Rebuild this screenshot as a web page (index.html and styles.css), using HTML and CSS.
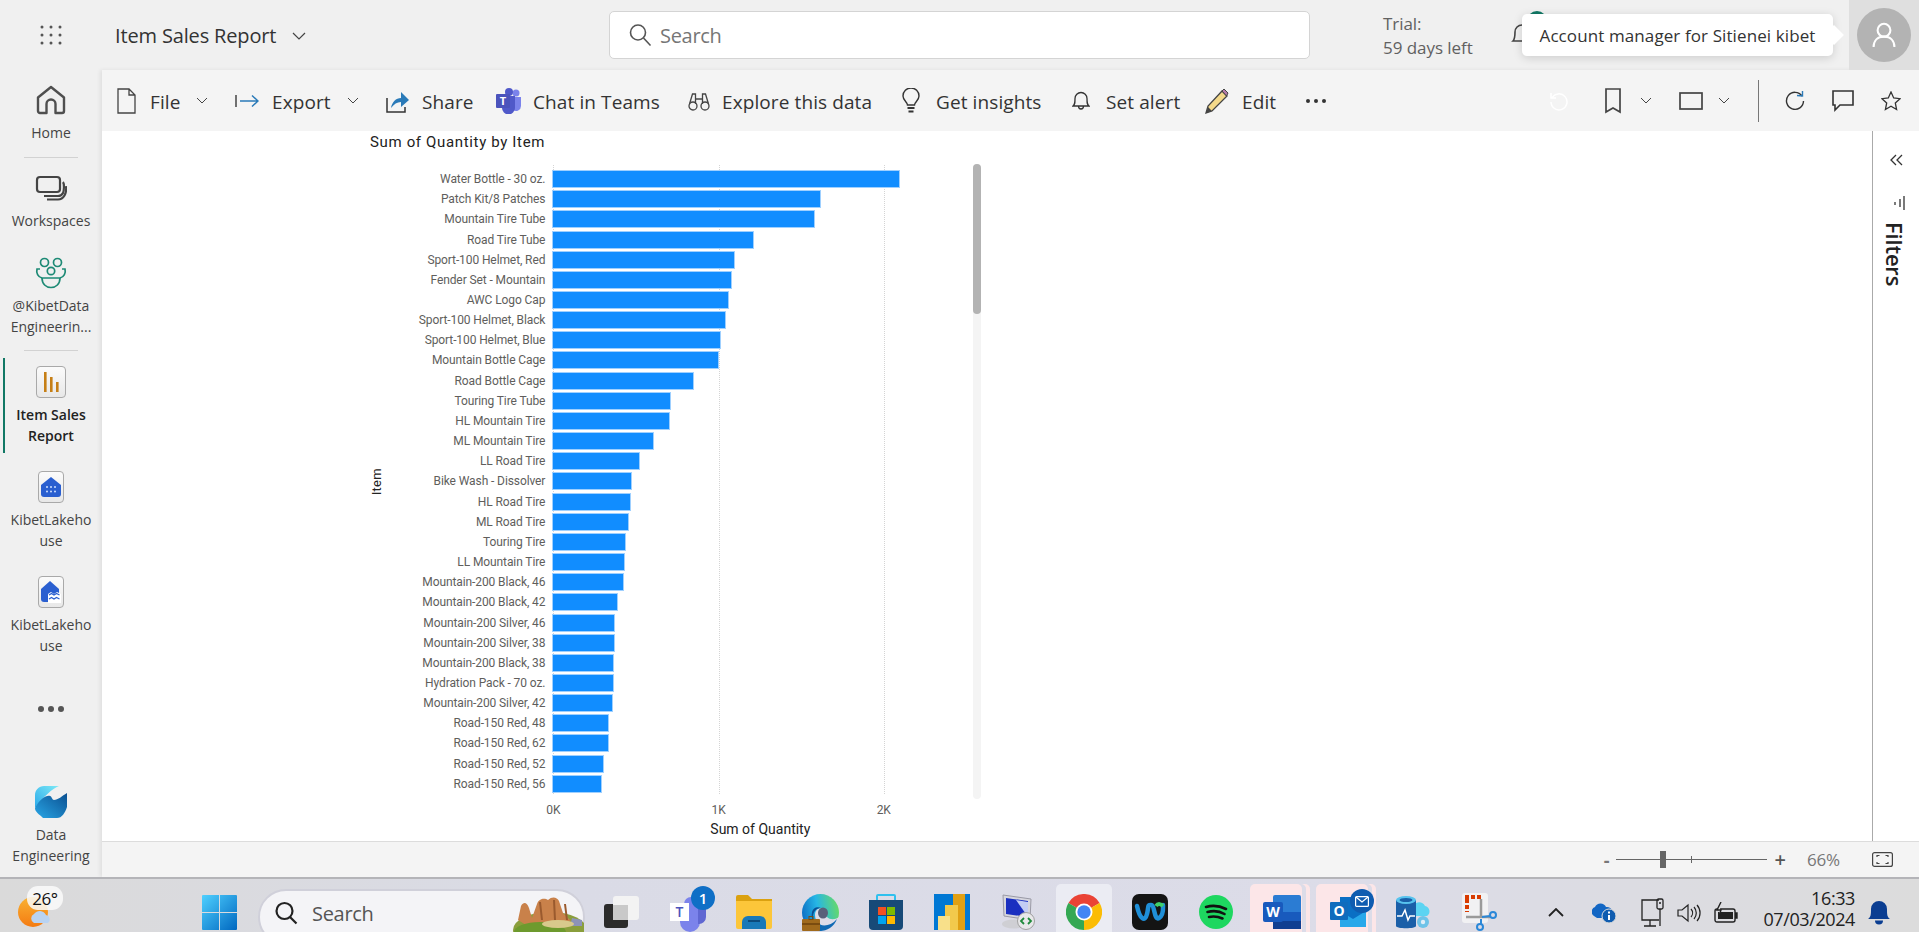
FILE: index.html
```html
<!DOCTYPE html>
<html>
<head>
    <meta charset="UTF-8">
    <title>Item Sales Report</title>
    <link rel="stylesheet" href="styles.css">
</head>
<body>
    <!-- top bar -->
    <header class="topbar">
        <div class="waffle">
            <svg width="24" height="22" viewBox="0 0 24 22" fill="#555"><circle cx="3" cy="3" r="1.5"/><circle cx="12" cy="3" r="1.5"/><circle cx="21" cy="3" r="1.5"/><circle cx="3" cy="11" r="1.5"/><circle cx="12" cy="11" r="1.5"/><circle cx="21" cy="11" r="1.5"/><circle cx="3" cy="19" r="1.5"/><circle cx="12" cy="19" r="1.5"/><circle cx="21" cy="19" r="1.5"/></svg>
        </div>
        <div class="report-title">
            <span>Item Sales Report</span>
            <svg width="14" height="8" viewBox="0 0 14 8" fill="none" stroke="#444" stroke-width="1.2"><path d="M1 1l6 6 6-6"/></svg>
        </div>
        <div class="searchbox">
            <svg width="24" height="24" viewBox="0 0 24 24" fill="none" stroke="#555" stroke-width="1.6"><circle cx="10" cy="9.5" r="7.5"/><path d="M15.5 15l7 7.5"/></svg>
            <span>Search</span>
        </div>
        <div class="trial">
            <div class="trial-text">Trial:<br>59 days left</div>
            <svg class="trial-bell" width="24" height="28" viewBox="0 0 24 28" fill="none" stroke="#444" stroke-width="1.6"><path d="M3 21c2-2 2-4 2-9a7 7 0 0 1 14 0c0 5 0 7 2 9z"/></svg>
            <span class="trial-dot"></span>
        </div>
        <div class="avatar-cell">
            <div class="avatar">
                <svg width="24" height="26" viewBox="0 0 30 32" fill="none" stroke="#fff" stroke-width="2.6"><circle cx="15" cy="10" r="8"/><path d="M2 31c0-8 5-13 13-13s13 5 13 13"/></svg>
            </div>
        </div>
        <div class="tooltip">Account manager for Sitienei kibet</div>
    </header>

    <div class="main">
        <!-- left nav -->
        <nav class="rail">
            <a class="nav-item nav-home">
                <span class="nav-icon"><svg width="30" height="30" viewBox="0 0 30 30" fill="none" stroke="#4f4f4f" stroke-width="2.4" stroke-linejoin="round"><path d="M2 12.5L15 2l13 10.5V26a2 2 0 0 1-2 2h-6.500V19a4.500 4.500 0 0 0-9 0v9H4a2 2 0 0 1-2-2z"/></svg></span>
                <span class="nav-label">Home</span>
            </a>
            <div class="nav-divider"></div>
            <a class="nav-item nav-space">
                <span class="nav-icon"><svg width="32" height="26" viewBox="0 0 32 26" fill="none" stroke="#444" stroke-width="2.200"><rect x="2" y="2" width="23" height="15" rx="3"/><path d="M28 7c1.500 2 1 9 0 11s-3 3-5 3H9"/><path d="M31 11c.5 4 0 7-1.500 9.500S26 24.500 23 24.500H12"/></svg></span>
                <span class="nav-label">Workspaces</span>
            </a>
            <a class="nav-item nav-group">
                <span class="nav-icon"><svg width="32" height="32" viewBox="0 0 32 32" fill="none" stroke="#1d8a75" stroke-width="1.700"><circle cx="9.500" cy="5.500" r="4"/><circle cx="22.500" cy="5.500" r="4"/><circle cx="16" cy="14" r="3.700"/><path d="M5 12H2c-1 4 1 8 5 9"/><path d="M27 12h3c1 4-1 8-5 9"/><path d="M7 21h18c0 6-4 9.500-9 9.500S7 27 7 21z"/></svg></span>
                <span class="nav-label">@KibetData<br>Engineerin...</span>
            </a>
            <div class="nav-divider nav-divider-low"></div>
            <a class="nav-item nav-active">
                <span class="tile"><svg width="16" height="20" viewBox="0 0 16 20" fill="#c67f16"><rect x="1" y="0" width="2.600" height="20"/><rect x="7" y="5" width="2.600" height="15"/><rect x="13" y="10" width="2.600" height="10"/></svg></span>
                <span class="nav-label">Item Sales<br>Report</span>
            </a>
            <a class="nav-item nav-lake">
                <span class="tile"><svg width="20" height="20" viewBox="0 0 20 20"><path d="M0 8L10 0l10 8v9a3 3 0 0 1-3 3H3a3 3 0 0 1-3-3z" fill="#2a5fd0"/><g fill="#cfe0ff"><circle cx="6" cy="10" r="1"/><circle cx="10" cy="10" r="1"/><circle cx="14" cy="10" r="1"/><circle cx="6" cy="14.500" r="1"/><circle cx="10" cy="14.500" r="1"/><circle cx="14" cy="14.500" r="1"/></g></svg></span>
                <span class="nav-label">KibetLakeho<br>use</span>
            </a>
            <a class="nav-item nav-ware">
                <span class="tile"><svg width="20" height="22" viewBox="0 0 20 22"><path d="M0 8L9 0l9 8v10a3 3 0 0 1-3 3H3a3 3 0 0 1-3-3z" fill="#2a5fd0"/><path d="M7 13l3-2 3 2 3-2 4 2v9H7z" fill="#fff"/><path d="M8 14l2.500-1.500 2.500 1.500 2.500-1.500 3 1.500M8 18l2.500-1.500 2.500 1.500 2.500-1.500 3 1.500" fill="none" stroke="#2a5fd0" stroke-width="1.300"/></svg></span>
                <span class="nav-label">KibetLakeho<br>use</span>
            </a>
            <div class="nav-more"><i></i><i></i><i></i></div>
            <a class="nav-item nav-fabric">
                <span class="nav-icon">
                    <svg width="32" height="32" viewBox="0 0 32 32">
                        <defs>
                            <linearGradient id="fabA" x1="1" y1="0" x2="0" y2="1"><stop offset="0" stop-color="#7eeaf6"/><stop offset="1" stop-color="#2aa9ea"/></linearGradient>
                            <linearGradient id="fabB" x1="0" y1="1" x2="1" y2="0"><stop offset="0" stop-color="#29a6e6"/><stop offset="1" stop-color="#0a4f90"/></linearGradient>
                        </defs>
                        <path d="M9 0h15c-7 3-15 10-24 22V9C0 4 4 0 9 0z" fill="url(#fabA)"/>
                        <path d="M0 22c5-9 11-13 15-12 2 .5 2 4 4 4 4 0 8-4 13-7v14c-2 6-5 11-10 11H8C4 28 0 26 0 22z" fill="url(#fabB)"/>
                    </svg>
                </span>
                <span class="nav-label">Data<br>Engineering</span>
            </a>
        </nav>

        <div class="work">
            <!-- toolbar -->
            <div class="toolbar">
                <div class="tools">
                    <div class="tool">
                        <svg width="20" height="26" viewBox="0 0 20 26" fill="none" stroke="#444" stroke-width="1.300"><path d="M1 1h11l6 6v18H1zM12 1v6h6"/></svg>
                        <span>File</span>
                        <svg class="chev" width="12" height="7" viewBox="0 0 12 7" fill="none" stroke="#444"><path d="M1 1l5 5 5-5"/></svg>
                    </div>
                    <div class="tool">
                        <svg width="24" height="16" viewBox="0 0 24 16" fill="none" stroke-width="1.500"><path d="M1 2v12" stroke="#444"/><path d="M5 8h18M17 2.500L23 8l-6 5.500" stroke="#2a7ab8"/></svg>
                        <span>Export</span>
                        <svg class="chev" width="12" height="7" viewBox="0 0 12 7" fill="none" stroke="#444"><path d="M1 1l5 5 5-5"/></svg>
                    </div>
                    <div class="tool">
                        <svg width="24" height="24" viewBox="0 0 24 24"><path d="M2 9v14h18v-5" fill="none" stroke="#333" stroke-width="1.500"/><path d="M6 19c1-6 5-10 10-10V3l8 8-8 7v-5c-4 0-7 2-10 6z" fill="#2a7ab8"/></svg>
                        <span>Share</span>
                    </div>
                    <div class="tool tool-teams">
                        <svg width="26" height="26" viewBox="0 0 26 26"><circle cx="20" cy="5" r="3.500" fill="#7b83eb"/><circle cx="13" cy="4" r="4" fill="#5059c9"/><path d="M17 9h8v9a5 5 0 0 1-8 4z" fill="#7b83eb"/><path d="M6 8h13v12a6 6 0 0 1-13 0z" fill="#5059c9"/><rect x="0" y="6" width="14" height="14" rx="1" fill="#4b53bc"/><text x="7" y="17" class="tile-letter" text-anchor="middle">T</text></svg>
                        <span>Chat in Teams</span>
                    </div>
                    <div class="tool tool-bino">
                        <svg width="22" height="20" viewBox="0 0 22 20" fill="none" stroke="#444" stroke-width="1.300"><path d="M1.500 13l3-10h3v10M20.500 13l-3-10h-3v10M8 8h6"/><rect x="1" y="11" width="8" height="8" rx="4"/><rect x="13" y="11" width="8" height="8" rx="4"/></svg>
                        <span>Explore this data</span>
                    </div>
                    <div class="tool tool-wide">
                        <svg width="18" height="26" viewBox="0 0 18 26" fill="none" stroke="#333" stroke-width="1.400"><path d="M5.500 17c0-3-4.500-4.500-4.500-9a8 8 0 0 1 16 0c0 4.500-4.500 6-4.500 9z"/><path d="M5.500 20h7M6.500 23.500h5" stroke-width="1.800"/></svg>
                        <span>Get insights</span>
                    </div>
                    <div class="tool tool-wide">
                        <svg width="18" height="20" viewBox="0 0 18 20" fill="none" stroke="#333" stroke-width="1.300"><path d="M1 15c2-1.500 2-3 2-7.500a6 6 0 0 1 12 0c0 4.500 0 6 2 7.500z"/><path d="M6.500 15a2.500 3 0 0 0 5 0" /></svg>
                        <span>Set alert</span>
                    </div>
                    <div class="tool">
                        <svg width="24" height="26" viewBox="0 0 24 26"><path d="M1 25l2-7L17 3l5 5L7 23z" fill="#f4d98a" stroke="#444" stroke-width="1.300"/><path d="M17 3l2-2 4 4-1.500 3z" fill="#b57aa8" stroke="#444"/><path d="M1 25l2-6 4 4z" fill="#444"/></svg>
                        <span>Edit</span>
                    </div>
                    <div class="tool-dots"><i></i><i></i><i></i></div>
                </div>
                <div class="tools-right">
                    <span class="tr-cell"><svg width="20" height="20" viewBox="0 0 20 20" fill="none" stroke="#fff" stroke-width="1.500"><path d="M3 7a8 8 0 1 1-1 4M2 2v5h5"/></svg></span>
                    <span class="tr-cell"><svg width="16" height="26" viewBox="0 0 16 26" fill="none" stroke="#444" stroke-width="1.700"><path d="M1 1h14v23l-7-4-7 4z"/></svg></span>
                    <span class="tr-cell"><svg width="12" height="7" viewBox="0 0 12 7" fill="none" stroke="#444"><path d="M1 1l5 5 5-5"/></svg></span>
                    <span class="tr-cell"><svg width="24" height="18" viewBox="0 0 24 18" fill="none" stroke="#444" stroke-width="1.700"><rect x="1" y="1" width="22" height="16"/></svg></span>
                    <span class="tr-cell"><svg width="12" height="7" viewBox="0 0 12 7" fill="none" stroke="#444"><path d="M1 1l5 5 5-5"/></svg></span>
                    <span class="tr-cell"><i class="tr-sep"></i></span>
                    <span class="tr-cell"><svg width="20" height="20" viewBox="0 0 20 20" fill="none" stroke="#333" stroke-width="1.400"><path d="M17 5a8.500 8.500 0 1 0 1.500 5"/><path d="M12 4.500l5.500.5V0" stroke="#2a7ab8"/></svg></span>
                    <span class="tr-cell"><svg width="22" height="22" viewBox="0 0 22 22" fill="none" stroke="#333" stroke-width="1.600"><path d="M1 1h20v14H8l-5 5v-5H1z"/></svg></span>
                    <span class="tr-cell"><svg width="20" height="20" viewBox="0 0 20 20" fill="none" stroke="#333" stroke-width="1.300"><path d="M10 1l2.700 6 6.300.7-4.700 4.300 1.300 6.500L10 15.300 4.400 18.500 5.700 12 1 7.700 7.300 7z"/></svg></span>
                </div>
            </div>

            <div class="content">
                <div class="canvas">
                    <section class="visual">
                        <h2 class="visual-title">Sum of Quantity by Item</h2>
                        <div class="plot">
                            <div class="y-title"><span>Item</span></div>
                            <div class="plot-main">
                                <div class="rows">
                                    <div class="gridlines"><i></i><i></i><i></i></div>
                                    <div class="row"><span class="row-label">Water Bottle - 30 oz.</span><div class="bar" style="width:346px"></div></div>
                                    <div class="row"><span class="row-label">Patch Kit/8 Patches</span><div class="bar" style="width:267px"></div></div>
                                    <div class="row"><span class="row-label">Mountain Tire Tube</span><div class="bar" style="width:261px"></div></div>
                                    <div class="row"><span class="row-label">Road Tire Tube</span><div class="bar" style="width:200px"></div></div>
                                    <div class="row"><span class="row-label">Sport-100 Helmet, Red</span><div class="bar" style="width:181px"></div></div>
                                    <div class="row"><span class="row-label">Fender Set - Mountain</span><div class="bar" style="width:178px"></div></div>
                                    <div class="row"><span class="row-label">AWC Logo Cap</span><div class="bar" style="width:175px"></div></div>
                                    <div class="row"><span class="row-label">Sport-100 Helmet, Black</span><div class="bar" style="width:172px"></div></div>
                                    <div class="row"><span class="row-label">Sport-100 Helmet, Blue</span><div class="bar" style="width:167px"></div></div>
                                    <div class="row"><span class="row-label">Mountain Bottle Cage</span><div class="bar" style="width:165px"></div></div>
                                    <div class="row"><span class="row-label">Road Bottle Cage</span><div class="bar" style="width:140px"></div></div>
                                    <div class="row"><span class="row-label">Touring Tire Tube</span><div class="bar" style="width:116.500px"></div></div>
                                    <div class="row"><span class="row-label">HL Mountain Tire</span><div class="bar" style="width:116px"></div></div>
                                    <div class="row"><span class="row-label">ML Mountain Tire</span><div class="bar" style="width:99.500px"></div></div>
                                    <div class="row"><span class="row-label">LL Road Tire</span><div class="bar" style="width:86px"></div></div>
                                    <div class="row"><span class="row-label">Bike Wash - Dissolver</span><div class="bar" style="width:77.500px"></div></div>
                                    <div class="row"><span class="row-label">HL Road Tire</span><div class="bar" style="width:77px"></div></div>
                                    <div class="row"><span class="row-label">ML Road Tire</span><div class="bar" style="width:75px"></div></div>
                                    <div class="row"><span class="row-label">Touring Tire</span><div class="bar" style="width:71.500px"></div></div>
                                    <div class="row"><span class="row-label">LL Mountain Tire</span><div class="bar" style="width:70.500px"></div></div>
                                    <div class="row"><span class="row-label">Mountain-200 Black, 46</span><div class="bar" style="width:69.600px"></div></div>
                                    <div class="row"><span class="row-label">Mountain-200 Black, 42</span><div class="bar" style="width:63.400px"></div></div>
                                    <div class="row"><span class="row-label">Mountain-200 Silver, 46</span><div class="bar" style="width:60.500px"></div></div>
                                    <div class="row"><span class="row-label">Mountain-200 Silver, 38</span><div class="bar" style="width:60.500px"></div></div>
                                    <div class="row"><span class="row-label">Mountain-200 Black, 38</span><div class="bar" style="width:60px"></div></div>
                                    <div class="row"><span class="row-label">Hydration Pack - 70 oz.</span><div class="bar" style="width:59.700px"></div></div>
                                    <div class="row"><span class="row-label">Mountain-200 Silver, 42</span><div class="bar" style="width:58.900px"></div></div>
                                    <div class="row"><span class="row-label">Road-150 Red, 48</span><div class="bar" style="width:55px"></div></div>
                                    <div class="row"><span class="row-label">Road-150 Red, 62</span><div class="bar" style="width:55px"></div></div>
                                    <div class="row"><span class="row-label">Road-150 Red, 52</span><div class="bar" style="width:49.700px"></div></div>
                                    <div class="row"><span class="row-label">Road-150 Red, 56</span><div class="bar" style="width:48px"></div></div>
                                </div>
                                <div class="x-ticks"><span>0K</span><span>1K</span><span>2K</span></div>
                                <div class="x-title">Sum of Quantity</div>
                            </div>
                            <div class="scrolltrack"><div class="scrollthumb"></div></div>
                        </div>
                    </section>
                </div>
                <aside class="filters">
                    <svg class="filters-collapse" width="13" height="12" viewBox="0 0 13 12" fill="none" stroke="#333" stroke-width="1.300"><path d="M6 1L1 6l5 5M12 1L7 6l5 5"/></svg>
                    <svg class="filters-glyph" width="12" height="14" viewBox="0 0 12 14" fill="none" stroke="#333" stroke-width="1.300"><path d="M11 0v14M7 3v8"/><path d="M2 6v3" stroke="#333"/></svg>
                    <div class="filters-label">Filters</div>
                </aside>
            </div>

            <footer class="statusbar">
                <span class="zoom-minus">-</span>
                <div class="zoom-slider"><i class="zoom-thumb"></i><i class="zoom-tick"></i></div>
                <span class="zoom-plus">+</span>
                <span class="zoom-value">66%</span>
                <svg width="21" height="15" viewBox="0 0 21 15" fill="none" stroke="#444" stroke-width="1.200"><rect x=".6" y=".6" width="19.800" height="13.800" rx="2"/><path d="M5 5V3.500h2.500M13.500 3.500H16V5M16 10v1.500h-2.500M7.500 11.500H5V10"/></svg>
            </footer>
        </div>
    </div>

    <!-- windows taskbar -->
    <div class="taskbar">
        <div class="weather">
            <svg width="34" height="30" viewBox="0 0 34 30"><defs><linearGradient id="sun" x1="0" y1="0" x2="0" y2="1"><stop offset="0" stop-color="#f9b233"/><stop offset="1" stop-color="#f47b12"/></linearGradient></defs><circle cx="15" cy="15" r="15" fill="url(#sun)"/><path d="M16 26a5 5 0 0 1 0-9 7 7 0 0 1 12 1 4.500 4.500 0 0 1 2 8z" fill="#b9d3f2"/></svg>
            <span class="weather-temp">26°</span>
        </div>
        <div class="winlogo">
            <svg width="35" height="35" viewBox="0 0 35 35"><defs><linearGradient id="win" x1="0" y1="0" x2="1" y2="1"><stop offset="0" stop-color="#4fd0ff"/><stop offset="1" stop-color="#0067c0"/></linearGradient></defs><path d="M1 0h16v17H0V1a1 1 0 0 1 1-1zM18 0h16a1 1 0 0 1 1 1v16H18zM0 18h17v17H1a1 1 0 0 1-1-1zM18 18h17v16a1 1 0 0 1-1 1H18z" fill="url(#win)"/></svg>
        </div>
        <div class="tb-search">
            <svg width="24" height="24" viewBox="0 0 24 24" fill="none" stroke="#222" stroke-width="2.200"><circle cx="10.500" cy="10" r="8"/><path d="M16 16l6.500 6.500"/></svg>
            <span>Search</span>
            <svg class="tb-scene" width="74" height="43" viewBox="0 0 74 43"><ellipse cx="40" cy="36" rx="37" ry="18" fill="#8a9e3c"/><path d="M8 26l3-14c3-5 6-3 8 2l3 10 5-14c2-6 8-6 11-4 4-4 9-3 11 1l4 12 8 8-16 4H16z" fill="#c9814a"/><path d="M30 8l2 18M44 6l1 20M55 10l2 16" stroke="#9a5a2e" stroke-width="2"/><path d="M62 24l10 2v6H60z" fill="#8d93b8"/><ellipse cx="30" cy="38" rx="26" ry="10" fill="#6d9a2e"/><ellipse cx="48" cy="30" rx="16" ry="4" fill="#d8c98c"/></svg>
        </div>
        <div class="apps">
            <div class="app">
                <svg width="36" height="32" viewBox="0 0 36 32"><rect x="0" y="8" width="24" height="24" rx="3" fill="#2b2b2b"/><rect x="9" y="0" width="26" height="24" rx="3" fill="#f3f3f3"/><rect x="9" y="9" width="15" height="15" fill="#c9c9c9"/></svg>
            </div>
            <div class="app app-teams">
                <svg width="46" height="44" viewBox="0 0 46 44"><circle cx="26" cy="14" r="7" fill="#7b83eb"/><path d="M15 13h20v19a10 10 0 0 1-20 0z" fill="#7b83eb"/><path d="M33 14h8v13a7 7 0 0 1-8 7z" fill="#5f67d2"/><rect x="5" y="13" width="19" height="18" fill="#fff"/><text x="14.500" y="27" class="app-t" text-anchor="middle">T</text></svg>
                <span class="app-badge">1</span>
            </div>
            <div class="app">
                <svg width="36" height="34" viewBox="0 0 36 34"><path d="M0 2a2 2 0 0 1 2-2h10l4 4h20v6H0z" fill="#dba110"/><path d="M0 6h36v26a2 2 0 0 1-2 2H2a2 2 0 0 1-2-2z" fill="#fcc63a"/><path d="M6 34v-7a6 6 0 0 1 6-6h12a6 6 0 0 1 6 6v7z" fill="#1979b8"/><rect x="12" y="25" width="12" height="2" fill="#0c4b7c"/></svg>
            </div>
            <div class="app">
                <svg width="37" height="37" viewBox="0 0 37 37"><defs><linearGradient id="edge" x1="0" y1=".6" x2="1" y2=".4"><stop offset="0" stop-color="#0c6fc4"/><stop offset=".45" stop-color="#26b6e6"/><stop offset="1" stop-color="#66d96a"/></linearGradient></defs><circle cx="18.500" cy="18.500" r="18.500" fill="url(#edge)"/><path d="M37 23c-4 3-9 3-12 0-3-3-2-6-4-8-3-2-8 0-8 6 0 7 6 11 11 12-7 4-2 4-6 4h18z" fill="#dcdce8"/><path d="M19 14c-5 0-8 4-8 9 0 2 1 4 2 6-3-3-4-7-3-11s5-6 9-4z" fill="#0a4f94"/><path d="M14 28c5 5 14 5 21-3-3 8-10 12-17 12-3 0-5-1-7-2z" fill="#0f69b4"/><ellipse cx="21" cy="19" rx="5" ry="5.500" fill="#59607a"/><rect x="0" y="25" width="18" height="12" rx="1" fill="#a06a1c"/><rect x="0" y="29" width="18" height="2" fill="#7a4c10"/><rect x="7" y="22.500" width="4" height="3" fill="none" stroke="#7a4c10"/></svg>
            </div>
            <div class="app">
                <svg width="36" height="36" viewBox="0 0 36 36"><path d="M9 7V2a1 1 0 0 1 1-1h16a1 1 0 0 1 1 1v5" fill="none" stroke="#2fc0ee" stroke-width="2"/><path d="M1 6h34v26a4 4 0 0 1-4 4H5a4 4 0 0 1-4-4z" fill="#174a78"/><rect x="10" y="13" width="8" height="8" fill="#f25022"/><rect x="19" y="13" width="8" height="8" fill="#7fba00"/><rect x="10" y="22" width="8" height="8" fill="#00a4ef"/><rect x="19" y="22" width="8" height="8" fill="#ffb900"/></svg>
            </div>
            <div class="app">
                <svg width="36" height="36" viewBox="0 0 36 36"><rect width="36" height="36" fill="#0078d4"/><rect x="19" width="12" height="36" fill="#e0a014"/><rect x="11" y="11" width="13" height="25" fill="#f2c94c"/><rect x="4" y="22" width="12" height="14" fill="#f8e08a"/></svg>
            </div>
            <div class="app">
                <svg width="36" height="36" viewBox="0 0 36 36"><path d="M3 1l28 4-1 21-26-4z" fill="#d6d6de" stroke="#9a9aa6"/><path d="M6 4l22 3v16L6 20z" fill="#1a2fc0"/><path d="M16 6l12 2v15z" fill="#c3cdf4"/><ellipse cx="14" cy="30" rx="12" ry="4.500" fill="#cfcfd4"/><circle cx="26" cy="27" r="8.500" fill="#e8e8ea" stroke="#a0a0a0"/><path d="M24 24l-3 3 3 3M28 24l3 3-3 3" stroke="#1f8a3b" stroke-width="1.800" fill="none"/></svg>
            </div>
            <div class="app app-current">
                <svg width="36" height="36" viewBox="0 0 36 36"><path d="M18 18L2.400 9A18 18 0 0 1 33.600 9z" fill="#ea4335"/><path d="M18 18L33.600 9A18 18 0 0 1 18 36z" fill="#fbbc05"/><path d="M18 18V36A18 18 0 0 1 2.400 9z" fill="#34a853"/><circle cx="18" cy="18" r="8.500" fill="#fff"/><circle cx="18" cy="18" r="6.700" fill="#4285f4"/></svg>
            </div>
            <div class="app">
                <svg width="36" height="36" viewBox="0 0 36 36"><rect width="36" height="36" rx="7" fill="#141414"/><path d="M5 12c3 14 8 16 10 8s0-9 4-9 3 16 8 13 4-10 4-13" fill="none" stroke="#1f8fd8" stroke-width="4.500" stroke-linecap="round"/><path d="M24 12c2-3 5-2 7 0" fill="none" stroke="#3fcf6a" stroke-width="4"/></svg>
            </div>
            <div class="app">
                <svg width="34" height="34" viewBox="0 0 34 34"><circle cx="17" cy="17" r="17" fill="#1ed760"/><path d="M7 12c7-2 14-1 20 2M8.500 17c6-1.500 12-1 17 2M10 22c5-1 9-.5 13.500 1.500" fill="none" stroke="#111" stroke-width="2.600" stroke-linecap="round"/></svg>
            </div>
            <div class="app app-flash">
                <svg width="38" height="34" viewBox="0 0 38 34"><rect x="10" width="28" height="34" rx="2" fill="#2b7cd3"/><rect x="10" y="17" width="28" height="9" fill="#185abd"/><rect x="10" y="26" width="28" height="8" fill="#103f91"/><rect y="7" width="20" height="20" rx="2" fill="#185abd"/><text x="10" y="22" class="app-l" text-anchor="middle">W</text></svg>
            </div>
            <div class="app app-flash app-mail">
                <svg width="36" height="30" viewBox="0 0 36 30"><path d="M10 0h26v28H10z" fill="#0a6fc4"/><path d="M10 14l13 8 13-8v16H10z" fill="#28a8ea"/><rect y="5" width="18" height="18" rx="1" fill="#0f6cbd"/><text x="9" y="19" class="app-l" text-anchor="middle">O</text></svg>
                <span class="mail-badge"><svg width="14" height="11" viewBox="0 0 14 11" fill="none" stroke="#fff" stroke-width="1.200"><rect x=".6" y=".6" width="12.800" height="9.800" rx="1"/><path d="M1 1l6 5 6-5"/></svg></span>
            </div>
            <div class="app">
                <svg width="36" height="36" viewBox="0 0 36 36"><path d="M16 14a7 7 0 0 1 13-2 5.500 5.500 0 0 1 2 10H16z" fill="#5cd4f2"/><path d="M0 6h20v26c0 3-20 3-20 0z" fill="#1a5fa8"/><ellipse cx="10" cy="6" rx="10" ry="4" fill="#57c3ee"/><ellipse cx="10" cy="6" rx="6.500" ry="2" fill="#1a5fa8"/><path d="M1 22h5l3-6 3 10 2-4h5" fill="none" stroke="#fff" stroke-width="1.500"/><circle cx="27" cy="28" r="6" fill="#6ec3e8"/><circle cx="27" cy="28" r="2.200" fill="#dfeef8"/></svg>
            </div>
            <div class="app">
                <svg width="36" height="38" viewBox="0 0 36 38"><rect width="26" height="30" rx="3" fill="#f1f1f3"/><path d="M3 4h16" stroke="#d83b01" stroke-width="4" stroke-dasharray="4 2"/><path d="M5 6v13" stroke="#d83b01" stroke-width="4" stroke-dasharray="4 2"/><path d="M19 6v18M4 24h24" stroke="#9a9a9a" stroke-width="2.500"/><path d="M20 24l8-1" stroke="#2b88d8" stroke-width="2"/><circle cx="31" cy="22" r="3" fill="none" stroke="#2b88d8" stroke-width="2"/><circle cx="18" cy="34" r="3" fill="none" stroke="#2b88d8" stroke-width="2"/><path d="M19 26v5" stroke="#2b88d8" stroke-width="2"/></svg>
            </div>
        </div>
        <div class="tray">
            <svg class="tray-chevron" width="16" height="9" viewBox="0 0 16 9" fill="none" stroke="#222" stroke-width="1.800"><path d="M1 8l7-7 7 7"/></svg>
            <svg class="tray-cloud" width="25" height="22" viewBox="0 0 25 22"><path d="M2 14a5 5 0 0 1 1-9 6 6 0 0 1 11 0 5 5 0 0 1 2 11H5z" fill="#1266c4"/><circle cx="17" cy="14" r="7" fill="#0f5cb0" stroke="#ddd"/><rect x="16" y="13" width="2" height="5" fill="#fff"/><rect x="16" y="9.500" width="2" height="2" fill="#fff"/></svg>
            <svg class="tray-net" width="27" height="30" viewBox="0 0 27 30" fill="none" stroke="#222" stroke-width="1.300"><path d="M19 2H2v20h17M4 28h12M10 22v6"/><rect x="17" y="1" width="6" height="10" rx="1.500"/><path d="M20 11v17"/><path d="M19 5h2"/></svg>
            <svg class="tray-vol" width="24" height="20" viewBox="0 0 24 20" fill="none" stroke="#222" stroke-width="1.200"><path d="M1 7h4l6-5v16l-6-5H1z"/><path d="M14 6a6 6 0 0 1 0 8M17 4a9 9 0 0 1 0 12M20 2a12 12 0 0 1 0 16"/></svg>
            <svg class="tray-batt" width="24" height="22" viewBox="0 0 24 22" fill="none" stroke="#222" stroke-width="1.400"><rect x="1" y="7" width="20" height="13" rx="2"/><rect x="4" y="10" width="15" height="7" fill="#222" stroke="none"/><path d="M21 11h2v5h-2" fill="#222"/><path d="M7 0L3 8h4l-2 6" stroke="#222" fill="#ddd"/></svg>
            <div class="clock"><span>16:33</span><span>07/03/2024</span></div>
            <svg class="tray-bell" width="22" height="25" viewBox="0 0 22 25" fill="#0a3d91"><path d="M0 19c3-2 3-5 3-10a8 8 0 0 1 16 0c0 5 0 8 3 10z"/><path d="M7 20.500h8a4 4 0 0 1-8 0z"/></svg>
        </div>
    </div>
</body>
</html>
```
FILE: styles.css
```css
*{
    padding: 0;
    margin: 0;
    box-sizing: border-box;
}

html, body{
    width: 1919px;
    height: 932px;
    overflow: hidden;
}

body{
    display: flex;
    flex-direction: column;
    background: #f0f0f0;
    font-family: "Open Sans", "Noto Sans", sans-serif;
    color: #333;
}

svg{
    display: block;
    flex: none;
}

/* top bar */
.topbar{
    position: relative;
    height: 70px;
    flex: none;
    display: grid;
    grid-template-columns: 102px 507px 701px 1fr 70px;
    align-items: center;
}

.waffle{
    padding-left: 39px;
}

.report-title{
    display: flex;
    align-items: center;
    gap: 16px;
    padding-left: 13px;
    padding-top: 1px;
    font-size: 20px;
    letter-spacing: -0.15px;
    color: #333;
}

.searchbox{
    height: 48px;
    display: flex;
    align-items: center;
    gap: 8px;
    padding-left: 18px;
    background: #fff;
    border: 1px solid #d4d4d4;
    border-radius: 5px;
    font-size: 20px;
    letter-spacing: -0.3px;
    color: #767676;
}

.searchbox span{
    padding-top: 1px;
}

.trial{
    position: relative;
    height: 70px;
    padding-left: 73px;
}

.trial-text{
    padding-top: 12px;
    font-size: 17px;
    line-height: 24px;
    letter-spacing: -0.05px;
    color: #616161;
}

.trial-bell{
    position: absolute;
    left: 200px;
    top: 20px;
}

.trial-dot{
    position: absolute;
    left: 217px;
    top: 11px;
    width: 20px;
    height: 20px;
    border-radius: 50%;
    background: #117865;
}

.avatar-cell{
    height: 70px;
    display: flex;
    align-items: center;
    justify-content: center;
    background: #dfdfdf;
}

.avatar{
    width: 54px;
    height: 54px;
    display: flex;
    align-items: center;
    justify-content: center;
    border-radius: 50%;
    background: #b3b3b3;
}

.tooltip{
    position: absolute;
    left: 1522px;
    top: 14px;
    width: 311px;
    height: 42px;
    display: flex;
    align-items: center;
    justify-content: center;
    background: #fff;
    border-radius: 5px;
    box-shadow: 0 2px 10px rgba(0,0,0,.15);
    font-size: 17px;
    letter-spacing: 0.1px;
    color: #333;
}

.tooltip:after{
    content: "";
    position: absolute;
    right: -8px;
    top: 14px;
    width: 14px;
    height: 14px;
    background: #fff;
    transform: rotate(45deg);
}

.main{
    flex: none;
    height: 807px;
    display: flex;
}

/* left nav */
.rail{
    width: 102px;
    flex: none;
    display: flex;
    flex-direction: column;
    padding: 14px 0 11px;
}

.nav-item{
    display: flex;
    flex-direction: column;
    align-items: center;
    gap: 6px;
}

.nav-icon{
    height: 32px;
    display: flex;
    align-items: center;
    justify-content: center;
}

.nav-label{
    font-size: 14px;
    line-height: 21px;
    text-align: center;
    color: #444;
}

.nav-divider{
    flex: none;
    width: 54px;
    height: 1px;
    margin: 14px 0 0 24px;
    background: #d2d2d2;
}

.nav-divider-low{
    margin-top: 13px;
}

.nav-space{
    margin-top: 14px;
}

.nav-group{
    margin-top: 26px;
}

.nav-active{
    margin-top: 7px;
    padding: 8px 0 7px;
    border-left: 2px solid #117865;
    margin-left: 3px;
    padding-right: 5px;
}

.nav-active .nav-label{
    font-weight: 600;
    color: #222;
}

.nav-lake{
    margin-top: 18px;
}

.nav-ware{
    margin-top: 25px;
}

.tile{
    width: 26px;
    height: 32px;
    display: flex;
    align-items: center;
    justify-content: center;
    background: linear-gradient(#fbfbfb, #e8e8e8);
    border: 1px solid #a9a9a9;
    border-radius: 4px;
}

.nav-active .tile{
    width: 30px;
}

.nav-more{
    display: flex;
    justify-content: center;
    gap: 4px;
    margin-top: 49px;
    height: 8px;
}

.nav-more i{
    width: 6px;
    height: 6px;
    margin-top: 1px;
    border-radius: 50%;
    background: #555;
}

.nav-fabric{
    margin-top: auto;
}

.work{
    flex: 1;
    min-width: 0;
    display: flex;
    flex-direction: column;
    box-shadow: -2px 0 4px rgba(0,0,0,.07);
}

/* toolbar */
.toolbar{
    height: 61px;
    flex: none;
    display: flex;
    justify-content: space-between;
    align-items: center;
    background: #f4f4f4;
    padding: 0 16px 0 15px;
}

.tools{
    display: grid;
    grid-template-columns: 118px 150px 111px 192px 214px 170px 133px 101px auto;
    align-items: center;
}

.tool{
    display: flex;
    align-items: center;
    gap: 13px;
    font-size: 19px;
    letter-spacing: 0.1px;
    color: #333;
    white-space: nowrap;
}

.tool span{
    padding-top: 2px;
}

.tool-teams{
    gap: 11px;
}

.tool-bino{
    gap: 12px;
}

.tool-wide{
    gap: 16px;
}

.chev{
    margin-left: 3px;
}

.tool-dots{
    display: flex;
    gap: 4px;
}

.tool-dots i{
    width: 4px;
    height: 4px;
    border-radius: 50%;
    background: #333;
}

.tools-right{
    display: grid;
    grid-template-columns: 54px 33px 45px 33px 34px 37px 48px 48px 24px;
    align-items: center;
}

.tr-cell{
    width: 24px;
    height: 42px;
    display: flex;
    align-items: center;
    justify-content: center;
}

.tr-sep{
    width: 1px;
    height: 42px;
    background: #777;
}

.tile-letter{
    font-family: "Open Sans", sans-serif;
    font-size: 11px;
    font-weight: 700;
    fill: #fff;
}

/* report area */
.content{
    flex: 1;
    min-height: 0;
    display: flex;
    background: #fff;
}

.canvas{
    flex: 1;
    padding-left: 267px;
}

.visual{
    width: 612px;
}

.visual-title{
    height: 22px;
    padding-left: 1px;
    font-family: "Roboto", sans-serif;
    font-size: 15px;
    font-weight: 400;
    line-height: 22px;
    letter-spacing: 0.65px;
    white-space: nowrap;
    color: #222;
}

.plot{
    display: flex;
    margin-top: 11px;
}

.y-title{
    width: 16px;
    height: 635px;
    display: flex;
    align-items: center;
    justify-content: center;
}

.y-title span{
    writing-mode: vertical-rl;
    transform: rotate(180deg);
    font-family: "Roboto", sans-serif;
    font-size: 13px;
    letter-spacing: 0.3px;
    color: #222;
}

.plot-main{
    width: 579px;
    padding-top: 5px;
}

.rows{
    position: relative;
    display: grid;
    grid-auto-rows: 20.17px;
}

.gridlines{
    position: absolute;
    left: 169px;
    top: -4px;
    bottom: 0;
    display: flex;
}

.gridlines i{
    width: 165.2px;
    border-left: 1px dotted #d4d4d4;
}

.row{
    position: relative;
    display: grid;
    grid-template-columns: 161px 409px;
    column-gap: 9px;
    align-items: center;
}

.row-label{
    font-family: "Roboto", sans-serif;
    font-size: 12px;
    letter-spacing: -0.1px;
    text-align: right;
    white-space: nowrap;
    color: #605e5c;
}

.bar{
    height: 16px;
    margin-left: -1px;
    background: #118dff;
    box-shadow: 0 0 0 1px #9fd0ff;
}

.x-ticks{
    display: flex;
    gap: 165.2px;
    margin: 7px 0 0 169px;
    height: 18px;
    font-family: "Roboto", sans-serif;
    font-size: 12px;
    line-height: 18px;
    letter-spacing: -0.1px;
    color: #605e5c;
}

.x-ticks span{
    width: 0;
    display: flex;
    justify-content: center;
}

.x-title{
    margin: 1px 0 0 170px;
    width: 412px;
    text-align: center;
    font-family: "Roboto", sans-serif;
    font-size: 14px;
    line-height: 18px;
    color: #222;
}

.scrolltrack{
    width: 8px;
    height: 635px;
    margin-left: 10px;
    background: #f4f4f4;
    border-radius: 4px;
}

.scrollthumb{
    height: 150px;
    background: #b3b3b3;
    border-radius: 4px;
}

/* filters pane */
.filters{
    width: 47px;
    flex: none;
    display: flex;
    flex-direction: column;
    align-items: center;
    border-left: 1px solid #aaa;
}

.filters-collapse{
    margin: 23px 0 0 1px;
}

.filters-glyph{
    margin: 30px 0 0 5px;
}

.filters-label{
    margin: 12px 0 0 -2px;
    writing-mode: vertical-rl;
    font-size: 22px;
    font-weight: 600;
    letter-spacing: -0.2px;
    color: #222;
}

/* zoom bar */
.statusbar{
    height: 36px;
    flex: none;
    display: flex;
    align-items: center;
    justify-content: flex-end;
    padding-right: 26px;
    background: #f4f4f4;
    border-top: 1px solid #dcdcdc;
    color: #555;
}

.zoom-minus{
    font-size: 18px;
    font-weight: 700;
    color: #777;
}

.zoom-slider{
    position: relative;
    width: 151px;
    height: 1px;
    margin-left: 6px;
    background: #666;
}

.zoom-thumb{
    position: absolute;
    left: 44px;
    top: -8px;
    width: 6px;
    height: 17px;
    background: #666;
}

.zoom-tick{
    position: absolute;
    left: 75px;
    top: -3px;
    width: 1px;
    height: 7px;
    background: #666;
}

.zoom-plus{
    margin-left: 8px;
    font-size: 20px;
    font-weight: 600;
}

.zoom-value{
    width: 65px;
    margin-left: 21px;
    font-size: 17px;
    letter-spacing: -0.2px;
    color: #777;
}

/* taskbar */
.taskbar{
    height: 55px;
    flex: none;
    display: flex;
    align-items: flex-start;
    overflow: hidden;
    border-top: 2px solid #b4b4b8;
    background: linear-gradient(90deg, #dadada 0%, #dadbe6 30%, #dcdce8 70%, #dcdcdc 100%);
}

.weather{
    position: relative;
    margin: 18px 0 0 18px;
    width: 34px;
}

.weather-temp{
    position: absolute;
    left: 9px;
    top: -11px;
    width: 36px;
    height: 24px;
    display: flex;
    align-items: center;
    justify-content: center;
    background: rgba(250,250,250,.85);
    border-radius: 11px;
    font-size: 17px;
    letter-spacing: -0.4px;
    color: #111;
}

.winlogo{
    margin: 16px 0 0 150px;
}

.tb-search{
    position: relative;
    width: 327px;
    height: 56px;
    margin: 10px 0 0 21px;
    display: flex;
    align-items: center;
    gap: 14px;
    padding: 0 0 8px 14px;
    background: #f4f4f7;
    border: 2px solid #d0d0da;
    border-radius: 28px;
    font-size: 20px;
    letter-spacing: -0.3px;
    color: #555;
}

.tb-scene{
    position: absolute;
    right: -1px;
    top: 3px;
}

.apps{
    display: flex;
    margin-left: 4px;
}

.app{
    position: relative;
    width: 66px;
    height: 48px;
    margin-top: 5px;
    padding-top: 8px;
    display: flex;
    align-items: center;
    justify-content: center;
}

.app-current:before{
    content: "";
    position: absolute;
    left: 5px;
    top: 0;
    width: 56px;
    height: 48px;
    background: #ebecf3;
    border-radius: 5px 5px 0 0;
    z-index: 0;
}

.app svg{
    position: relative;
}

.app-flash:before{
    content: "";
    position: absolute;
    left: 1px;
    top: 0;
    width: 52px;
    height: 48px;
    background: #fce6e8;
    border-radius: 5px 5px 0 0;
    box-shadow: 4px 0 0 #dcdce8, 8px 0 0 #fce6e8;
}

.app-badge{
    position: absolute;
    right: 6px;
    top: 2px;
    width: 24px;
    height: 24px;
    display: flex;
    align-items: center;
    justify-content: center;
    background: #0f6fc6;
    border-radius: 50%;
    font-size: 15px;
    font-weight: 600;
    color: #fff;
}

.mail-badge{
    position: absolute;
    right: 7px;
    top: 5px;
    width: 24px;
    height: 24px;
    display: flex;
    align-items: center;
    justify-content: center;
    background: #0f5cb0;
    border-radius: 50%;
}

.app-t{
    font-family: "Open Sans", sans-serif;
    font-size: 14px;
    font-weight: 600;
    fill: #4b53bc;
}

.app-l{
    font-family: "Open Sans", sans-serif;
    font-size: 14px;
    font-weight: 700;
    fill: #fff;
}

.tray{
    position: relative;
    flex: 1;
    height: 53px;
    display: flex;
    align-items: center;
    padding-top: 14px;
}

.tray-chevron{
    margin-left: 35px;
}

.tray-cloud{
    margin-left: 28px;
}

.tray-net{
    margin-left: 23px;
}

.tray-vol{
    margin-left: 10px;
}

.tray-batt{
    margin-left: 13px;
}

.clock{
    width: 117px;
    align-self: flex-end;
    margin-bottom: 3px;
    display: flex;
    flex-direction: column;
    gap: 1px;
    text-align: right;
    font-size: 18px;
    line-height: 20px;
    letter-spacing: -0.4px;
    color: #222;
}

.tray-bell{
    margin-left: 13px;
}
```
